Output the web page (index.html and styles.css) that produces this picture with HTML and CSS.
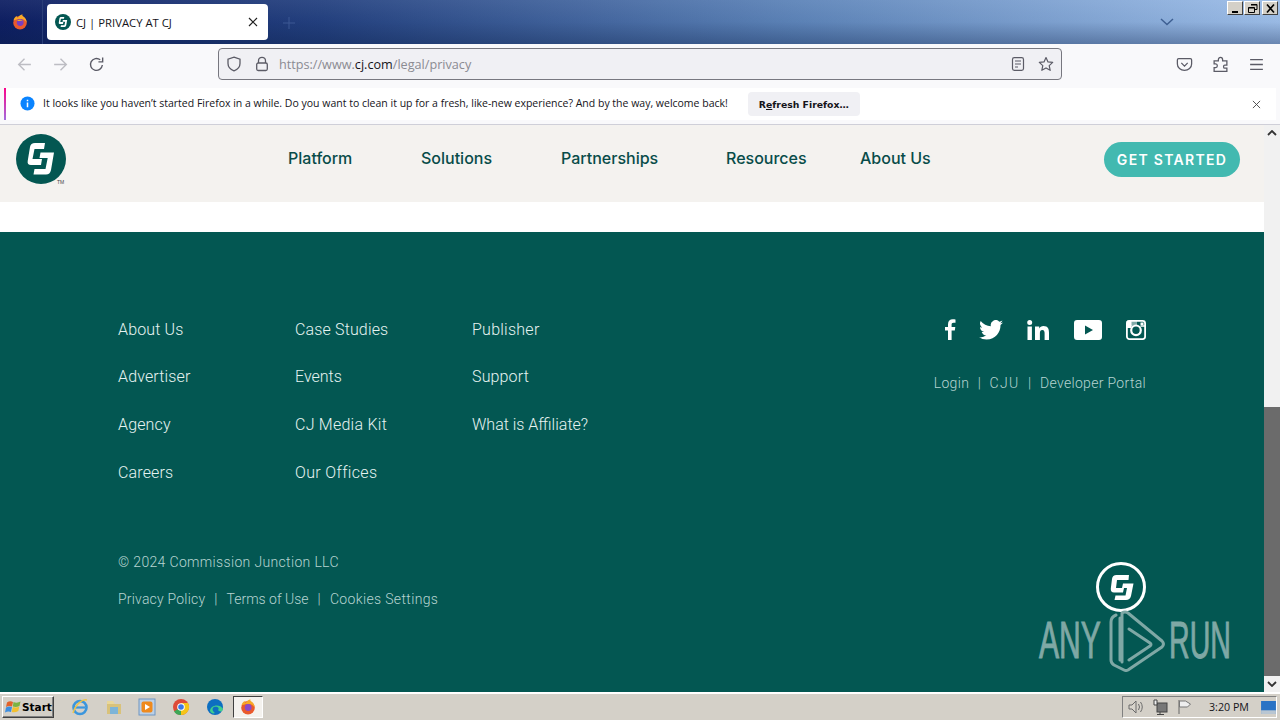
FILE: index.html
```html
<!DOCTYPE html>
<html lang="en">
<head>
<meta charset="utf-8">
<title>CJ | PRIVACY AT CJ</title>
<link rel="stylesheet" href="styles.css">
</head>
<body>
<div class="window">
  <header class="titlebar">
    <div class="ff-menu">
      <svg class="ic16 ff-ic" viewBox="0 0 16 16"><circle cx="8" cy="8.700" r="6.800" fill="#ea5a2c"/><path d="M1.500 6.500C2 4 3.500 2.500 5 2c-.5 1 0 1.500 1 1.500C7 2 9 .5 10.500.3 10 1.500 10.500 2 12 3c1.500 1.300 2.500 3 2.700 5.500C13 5.500 10 4.500 7 5 4.500 5.200 3 6 1.500 6.500z" fill="#f7a928"/><circle cx="8.200" cy="8.500" r="3.400" fill="#7a3fc0"/><path d="M5 6.500c2-1.500 5-1 6 1-1-.8-2-.8-3-.5-1 .2-2 0-3-.5z" fill="#f7a928"/></svg>
    </div>
    <div class="tab">
      <svg class="ic16" viewBox="0 0 50 50"><circle cx="25" cy="25" r="25" fill="#035752"/><path class="cj" d="M29 9L28 15H18.500L16.500 25H26L25 31H15Q11 31 11.700 27L14 13Q14.700 9 19 9Z"/><path class="cj" d="M24.500 18.500H38L35 36Q34 40.500 30 40.500H17.500L18.500 35H29.500L31.700 24H23.500Z"/></svg>
      <span class="tab-title">CJ | PRIVACY AT CJ</span>
      <svg class="tab-x" viewBox="0 0 10 10"><path d="M1 1l8 8M9 1l-8 8" stroke="#222" stroke-width="1.200"/></svg>
    </div>
    <svg class="newtab" viewBox="0 0 14 14"><path d="M7 1v12M1 7h12" stroke="#3c5894" stroke-width="1"/></svg>
    <div class="title-spacer"></div>
    <svg class="tabs-down" viewBox="0 0 14 8"><path d="M1 1l6 5.500 6-5.500" fill="none" stroke="#3e5f92" stroke-width="1.500"/></svg>
    <div class="wincaps">
      <span class="cap"><svg viewBox="0 0 13 11"><path d="M3 8h6v2H3z" fill="#000"/></svg></span>
      <span class="cap"><svg viewBox="0 0 13 11"><path d="M5 1.500h6v5H9M2.500 4.500h6v5h-6zM2.500 5h6M5 2h6" fill="none" stroke="#000"/></svg></span>
      <span class="cap cap-x"><svg viewBox="0 0 13 11"><path d="M3 1.500l7 8M10 1.500l-7 8" stroke="#000" stroke-width="1.700"/></svg></span>
    </div>
  </header>

  <nav class="toolbar">
    <svg class="tool tool-off" viewBox="0 0 16 16"><path d="M14 8H2.500M8 2.500L2.500 8 8 13.500" fill="none" stroke="currentColor" stroke-width="1.300"/></svg>
    <svg class="tool tool-off" viewBox="0 0 16 16"><path d="M2 8h11.500M8 2.500L13.500 8 8 13.500" fill="none" stroke="currentColor" stroke-width="1.300"/></svg>
    <svg class="tool" viewBox="0 0 16 16"><path d="M13.500 8.500A5.600 5.600 0 1 1 11.500 3.600M13.800 1.500v4h-4" fill="none" stroke="currentColor" stroke-width="1.300"/></svg>
    <div class="urlbar">
      <svg class="url-ic" viewBox="0 0 16 16"><path d="M8 1.200l6 2v4.300c0 3.500-2.500 6-6 7.300-3.500-1.300-6-3.800-6-7.300V3.200z" fill="none" stroke="currentColor" stroke-width="1.300"/></svg>
      <svg class="url-ic" viewBox="0 0 16 16"><path d="M4.500 7V4.800a3.500 3.500 0 0 1 7 0V7" fill="none" stroke="currentColor" stroke-width="1.300"/><rect x="2.700" y="7" width="10.600" height="7.500" rx="1.500" fill="none" stroke="currentColor" stroke-width="1.300"/></svg>
      <span class="url"><span class="url-dim">https://www.</span>cj.com<span class="url-dim">/legal/privacy</span></span>
      <svg class="url-ic-r" viewBox="0 0 16 16"><rect x="2.500" y="1.700" width="11" height="12.600" rx="1.800" fill="none" stroke="currentColor" stroke-width="1.200"/><path d="M5 5h6M5 8h6M5 11h3" stroke="currentColor" stroke-width="1.200"/></svg>
      <svg class="url-ic-r" viewBox="0 0 16 16"><path d="M8 1.500l2 4.400 4.700.5-3.500 3.200 1 4.700L8 11.900l-4.200 2.400 1-4.700L1.300 6.400 6 5.900z" fill="none" stroke="currentColor" stroke-width="1.200" stroke-linejoin="round"/></svg>
    </div>
    <div class="tool-right">
      <svg class="tool" viewBox="0 0 16 16"><path d="M2.500 2.500h11q1.200 0 1.200 1.200v3.800c0 3.500-3 6-6.700 6s-6.700-2.500-6.700-6V3.700q0-1.200 1.200-1.200zM5 6.500l3 3 3-3" fill="none" stroke="currentColor" stroke-width="1.200"/></svg>
      <svg class="tool" viewBox="0 0 16 16"><path d="M6 3.500c0-3 4-3 4 0v1h4v4h-2c-1.500 0-1.500 3 0 3h2V14.500H2V11h1.500c2 0 2-3.500 0-3.500H2V4.500h4z" fill="none" stroke="currentColor" stroke-width="1.200"/></svg>
      <svg class="tool" viewBox="0 0 16 16"><path d="M2 3.500h12M2 8h12M2 12.500h12" stroke="currentColor" stroke-width="1.200"/></svg>
    </div>
  </nav>

  <div class="notice">
    <div class="notice-inner">
      <svg class="info" viewBox="0 0 16 16"><circle cx="8" cy="8" r="7.500" fill="#0a84ff"/><path d="M7.200 7h1.600v5H7.200zM7.200 4h1.600v1.700H7.200z" fill="#fff"/></svg>
      <span class="notice-text">It looks like you haven’t started Firefox in a while. Do you want to clean it up for a fresh, like-new experience? And by the way, welcome back!</span>
      <button class="notice-btn">R<u>e</u>fresh Firefox…</button>
      <div class="title-spacer"></div>
      <svg class="notice-x" viewBox="0 0 10 10"><path d="M1 1l8 8M9 1l-8 8" stroke="#444" stroke-width="1"/></svg>
    </div>
  </div>

  <div class="viewport">
    <main class="page">
      <div class="site-head">
        <div class="logo-wrap">
          <svg class="logo" viewBox="0 0 50 50"><circle cx="25" cy="25" r="25" fill="#035752"/><path class="cj" d="M29 9L28 15H18.500L16.500 25H26L25 31H15Q11 31 11.700 27L14 13Q14.700 9 19 9Z"/><path class="cj" d="M24.500 18.500H38L35 36Q34 40.500 30 40.500H17.500L18.500 35H29.500L31.700 24H23.500Z"/></svg>
          <span class="tm">TM</span>
        </div>
        <ul class="main-nav">
          <li class="n1">Platform</li>
          <li class="n2">Solutions</li>
          <li class="n3">Partnerships</li>
          <li class="n4">Resources</li>
          <li class="n5">About Us</li>
        </ul>
        <a class="cta">GET STARTED</a>
      </div>
      <div class="gap-white"></div>
      <footer class="site-foot">
        <div class="foot-top">
          <ul class="foot-links">
            <li>About Us</li><li>Case Studies</li><li class="roomy">Publisher</li>
            <li>Advertiser</li><li class="snug">Events</li><li>Support</li>
            <li>Agency</li><li class="roomy">CJ Media Kit</li><li class="flat">What is Affiliate?</li>
            <li>Careers</li><li class="roomy-2">Our Offices</li>
          </ul>
          <div class="foot-right">
            <div class="social">
              <svg class="s-f" viewBox="0 0 11 21"><path d="M3 21V11.500H0V8h3V5.200C3 2 5 .3 7.700.3c1.300 0 2.400.1 2.800.2v3.300H8.500c-1.500 0-1.900.8-1.900 1.900V8h3.700l-.5 3.500H6.600V21z" fill="#fff"/></svg>
              <svg class="s-t" viewBox="0 0 24 20"><path d="M24 2.400c-.9.400-1.800.7-2.800.8 1-.6 1.800-1.600 2.200-2.700-1 .6-2 1-3.100 1.200A4.900 4.900 0 0 0 11.900 6.200 14 14 0 0 1 1.700.9a4.900 4.900 0 0 0 1.500 6.600c-.8 0-1.600-.2-2.200-.6v.1c0 2.400 1.700 4.400 3.900 4.800-.7.200-1.500.2-2.200.1.600 2 2.400 3.400 4.600 3.400A9.900 9.900 0 0 1 0 17.300 14 14 0 0 0 7.500 19.500c9.100 0 14-7.500 14-14v-.6c1-.7 1.800-1.600 2.500-2.500z" fill="#fff"/></svg>
              <svg class="s-l" viewBox="0 0 22 20"><path d="M.5 6.500h4.400V20H.5zM2.700 0a2.500 2.500 0 1 1 0 5 2.500 2.500 0 0 1 0-5zM8 6.500h4.200v1.900c.7-1.200 2.200-2.300 4.300-2.300 4.400 0 5.500 2.800 5.500 6.700V20h-4.400v-6.400c0-1.700-.2-3.600-2.300-3.600s-2.400 1.700-2.400 3.500V20H8z" fill="#fff"/></svg>
              <svg class="s-y" viewBox="0 0 28 20"><path fill-rule="evenodd" d="M3 0h22q3 0 3 3v14q0 3-3 3H3q-3 0-3-3V3q0-3 3-3zM11 5.500v9l8-4.500z" fill="#fff"/></svg>
              <svg class="s-i" viewBox="0 0 20 20"><rect x=".9" y=".9" width="18.200" height="18.200" rx="2.500" fill="none" stroke="#fff" stroke-width="1.800"/><path d="M1 7.500h4v-6.500H1zM6 1v5M8 1v4M10 1v4" stroke="#fff" fill="#fff" stroke-width="1"/><path d="M1 6h4.500M14.500 6H19" stroke="#fff" stroke-width="1.500"/><circle cx="10" cy="10.300" r="4.800" fill="none" stroke="#fff" stroke-width="2.200"/><rect x="14.500" y="2.500" width="3" height="2.500" fill="#fff"/></svg>
            </div>
            <div class="foot-sub"><span>Login</span><i>|</i><span class="cju">CJU</span><i>|</i><span>Developer Portal</span></div>
          </div>
        </div>
        <div class="foot-copy">© 2024 Commission Junction LLC</div>
        <div class="foot-legal"><span>Privacy Policy</span><i>|</i><span class="terms">Terms of Use</span><i>|</i><span class="cookies">Cookies Settings</span></div>
        <div class="badge">
          <svg class="badge-logo" viewBox="0 0 50 50"><circle cx="25" cy="25" r="23.500" fill="#035752" stroke="#fff" stroke-width="3"/><path class="cj" d="M33 13H20.500Q16.500 13 16 17L14.800 26.500Q14.500 30.500 18 30.500H27L28 26H20L21 18H32.500Z"/><path class="cj" d="M27 21.500H37.500L35 34Q34 38 30 38H18.500L19.500 33.500H29.500L31 26H26Z"/></svg>
        </div>
        <div class="anyrun">
          <span class="any">ANY</span>
          <svg class="anyrun-mark" viewBox="0 0 58 62"><path d="M8 5Q3 7 3 12V50Q3 53 6 55L16 60Q18 61 20 60L54 37Q57 34 54 31L20 3Q17 1 14 3V52M12 8V50M21 19L42 33Q44 34.500 42 36L21 50" fill="none" stroke="#7fa8a5" stroke-width="3" stroke-linejoin="round" stroke-linecap="round"/></svg>
          <span class="run">RUN</span>
        </div>
      </footer>
    </main>
    <aside class="scrollbar">
      <div class="sb-btn"><svg viewBox="0 0 10 6"><path d="M1 5l4-4 4 4" fill="none" stroke="#333" stroke-width="1.800"/></svg></div>
      <div class="sb-track"></div>
      <div class="sb-thumb"></div>
      <div class="sb-btn"><svg viewBox="0 0 10 6"><path d="M1 1l4 4 4-4" fill="none" stroke="#333" stroke-width="1.800"/></svg></div>
    </aside>
  </div>

  <div class="taskbar">
    <button class="start">
      <svg class="start-ic" viewBox="0 0 16 14"><path d="M2 2.500Q5 .5 8 2L7 6.500Q4 5.500 1 7z" fill="#e2622a"/><path d="M8.500 2Q12 3.500 15.500 1.500L14.500 6Q11 7.500 7.800 6.500z" fill="#7bb342"/><path d="M1 7.500Q4 6 7 7L6 12Q3 11 0 12.500z" fill="#3d8ee0"/><path d="M7.800 7Q11 8 14.300 6.500L13.300 11Q10 13 6.700 12z" fill="#f3c02f"/></svg>
      <span>Start</span>
    </button>
    <div class="quick">
      <svg class="task-ic" viewBox="0 0 18 18"><circle cx="9" cy="9.500" r="6.500" fill="none" stroke="#3b96dd" stroke-width="2.600"/><path d="M4 9.500h10" stroke="#3b96dd" stroke-width="2.200"/><path d="M2 15C5 5 12 1 16 2" fill="none" stroke="#efc44a" stroke-width="1.500"/></svg>
      <svg class="task-ic" viewBox="0 0 18 18"><path d="M2 6h14v10H2z" fill="#d9c27a"/><path d="M2 6V3h6l2 3z" fill="#e9d79a"/><path d="M5 9h8v7H5z" fill="#7db4d8"/></svg>
      <svg class="task-ic" viewBox="0 0 18 18"><rect x="1" y="1" width="16" height="16" fill="#bcd0e6" stroke="#6f96c2"/><rect x="3.500" y="3.500" width="11" height="11" rx="2" fill="#ef8a1d"/><path d="M7 6l5 3-5 3z" fill="#fff"/></svg>
      <svg class="task-ic" viewBox="0 0 18 18"><circle cx="9" cy="9" r="8" fill="#dd4b39"/><path d="M9 9L2 13.500A8 8 0 0 0 9 17z" fill="#3da757"/><path d="M9 5h7a8 8 0 0 1-7 12z" fill="#f5c518"/><circle cx="9" cy="9" r="3.800" fill="#fff"/><circle cx="9" cy="9" r="2.800" fill="#3b78e7"/></svg>
      <svg class="task-ic" viewBox="0 0 18 18"><circle cx="9" cy="9" r="8" fill="#0d6fc1"/><path d="M4 13c0-6 10-8 13-2 0 3-4 3-5 1 2-2-1-4-4-3-2 1-2 4 1 6-2 1-4 0-5-2z" fill="#3fcf8e"/></svg>
      <span class="task-active">
        <svg class="ic16" viewBox="0 0 16 16"><circle cx="8" cy="8.700" r="6.800" fill="#ea5a2c"/><path d="M1.500 6.500C2 4 3.500 2.500 5 2c-.5 1 0 1.500 1 1.500C7 2 9 .5 10.500.3 10 1.500 10.500 2 12 3c1.500 1.300 2.500 3 2.700 5.500C13 5.500 10 4.500 7 5 4.500 5.200 3 6 1.500 6.500z" fill="#f7a928"/><circle cx="8.200" cy="8.500" r="3.400" fill="#8a4bc9"/></svg>
      </span>
    </div>
    <div class="title-spacer"></div>
    <div class="tray">
      <svg class="tray-ic" viewBox="0 0 16 16"><path d="M1 6h3l4-4v12l-4-4H1zM10.500 5q2 3 0 6M12.500 3q3.500 5 0 10" fill="#d8d4cc" stroke="#6a6a6a"/></svg>
      <svg class="tray-ic" viewBox="0 0 16 16"><rect x="5" y="4" width="10" height="9" fill="#777" stroke="#444"/><path d="M2 1h3v5H2zM8 13v2M5 15.500h7" fill="#eee" stroke="#444"/></svg>
      <svg class="tray-ic" viewBox="0 0 16 16"><path d="M3 1v14" stroke="#666"/><path d="M3.500 2h6l5 3-3 3H3.500z" fill="#eee" stroke="#777"/></svg>
      <span class="clock">3:20 PM</span>
      <svg class="desk-ic" viewBox="0 0 16 14"><rect width="16" height="14" fill="#2a73c5"/><rect y="10" width="16" height="4" fill="#b9c6d2"/></svg>
    </div>
  </div>
</div>
</body>
</html>
```

FILE: styles.css
```css
* { box-sizing: border-box; }
html, body { margin: 0; height: 100%; overflow: hidden; }
ul { list-style: none; margin: 0; padding: 0; }
svg { display: block; flex: none; }
i { font-style: normal; }
.window { width: 1280px; height: 720px; display: flex; flex-direction: column; font-family: "Open Sans", "Noto Sans", sans-serif; color: #15141a; }
.title-spacer { flex: 1; }
.ic16 { width: 16px; height: 16px; }

.titlebar { height: 44px; display: flex; align-items: flex-start; background: linear-gradient(180deg, rgba(255,255,255,.06), rgba(0,0,0,.02) 50%, rgba(10,30,70,.34)), linear-gradient(90deg, #0e1f63 0, #23407f 25%, #5c83b8 62%, #9cbde8 100%); position: relative; }
.ff-menu { width: 43px; height: 44px; display: flex; align-items: center; justify-content: center; border-right: 1px solid #2b3f78; }
.ff-ic { margin-right: 3px; }
.tab { margin: 4px 0 0 4px; width: 221px; height: 36px; background: #fff; border-radius: 4px; display: flex; align-items: center; padding: 0 10px 0 8px; }
.tab-title { margin-left: 5px; font-size: 11.300px; flex: 1; white-space: nowrap; }
.tab-x { width: 10px; height: 10px; }
.newtab { width: 14px; height: 14px; margin: 16px 0 0 14px; }
.tabs-down { width: 14px; height: 8px; margin: 18px 106px 0 0; }
.wincaps { position: absolute; top: 1px; right: 2px; display: flex; gap: 1px; }
.cap { width: 16px; height: 14px; background: #d4d0c8; border: 1px solid; border-color: #fff #404040 #404040 #fff; display: flex; align-items: center; justify-content: center; }
.cap svg { width: 13px; height: 11px; }
.cap-x { margin-left: 1px; }

.toolbar { height: 44px; background: #f9f9fb; display: flex; align-items: center; padding: 0 0 4px 16px; color: #4a4a4f; }
.tool { width: 17px; height: 17px; color: #5b5b66; margin-right: 19px; }
.tool-off { color: #bdbdc3; }
.urlbar { flex: none; width: 844px; height: 32px; margin-left: 94px; background: #f0f0f4; border: 1px solid #77777f; border-radius: 4px; display: flex; align-items: center; padding: 0 7px; color: #5b5b66; }
.url-ic { width: 16px; height: 16px; margin-right: 12px; }
.url { flex: 1; font-size: 12.650px; color: #15141a; white-space: nowrap; margin-left: -3px; }
.url-dim { color: #8b8b92; }
.url-ic-r { width: 16px; height: 16px; margin-left: 12px; }
.tool-right { display: flex; flex: none; margin-left: 114px; }
.tool-right .tool { margin-right: 19px; width: 17px; }

.notice { height: 37px; background: #f9f9fb; border-bottom: 1px solid #cfcfd8; padding: 0 4px; }
.notice-inner { height: 32px; background: #fff; border-left: 2px solid; border-image: linear-gradient(180deg, #f08, #a070e0) 1; display: flex; align-items: center; padding-left: 14px; }
.info { width: 15px; height: 15px; margin-top: -1px; }
.notice-text { margin: -3px 0 0 8px; font-size: 10.500px; white-space: nowrap; }
.notice-btn { margin-left: 20px; width: 112px; height: 24px; border: 0; border-radius: 4px; background: #f0f0f4; font-family: "DejaVu Sans", sans-serif; font-weight: 700; font-size: 9.300px; color: #15141a; padding: 0; }
.notice-x { width: 9px; height: 9px; margin-right: 15px; }

.viewport { height: 567px; display: flex; }
.page { flex: 1; min-width: 0; display: flex; flex-direction: column; background: #fff; }
.site-head { height: 77px; background: #f4f2ef; display: flex; align-items: flex-start; padding-left: 16px; position: relative; }
.logo-wrap { width: 50px; margin-top: 9px; position: relative; }
.logo { width: 50px; height: 50px; }
.cj { fill: #fff; }
.tm { position: absolute; font: 5px "Liberation Sans", sans-serif; left: 41px; top: 45px; color: #444; }
.main-nav { display: flex; margin-left: 222px; margin-top: 23px; font-family: Inter, sans-serif; font-weight: 500; font-size: 16px; line-height: 20px; color: #084c49; white-space: nowrap; }
.n1 { width: 133px; }
.n2 { width: 140px; }
.n3 { width: 165px; }
.n4 { width: 134px; }
.cta { position: absolute; right: 24px; top: 17px; width: 136px; height: 35px; border-radius: 18px; background: #42b9b0; color: #fff; font-family: Inter, sans-serif; font-weight: 600; font-size: 14px; letter-spacing: 1.300px; display: flex; align-items: center; justify-content: center; }
.gap-white { height: 30px; }

.site-foot { flex: 1; background: #035752; color: #e6f3f1; font-family: Roboto, sans-serif; font-weight: 300; position: relative; padding: 86.800px 118px 0; }
.foot-top { display: flex; justify-content: space-between; height: 223.200px; }
.foot-links { display: grid; grid-template-columns: 177px 177px 177px; grid-auto-rows: 47.600px; font-size: 16px; line-height: 22px; align-content: start; letter-spacing: .15px; }
.foot-links .roomy { letter-spacing: .25px; }
.foot-links .roomy-2 { letter-spacing: .35px; }
.foot-links .snug { letter-spacing: 0; }
.foot-links .flat { letter-spacing: 0; }
.foot-right { display: flex; flex-direction: column; align-items: flex-end; margin-top: 1px; }
.social { display: flex; align-items: center; height: 20px; }
.s-f { width: 11px; height: 21px; margin-right: 23px; }
.s-t { width: 24px; height: 20px; margin-right: 24px; }
.s-l { width: 22px; height: 20px; margin-right: 25px; }
.s-y { width: 28px; height: 20px; margin-right: 24px; }
.s-i { width: 20px; height: 20px; }
.foot-sub { margin-top: 33px; font-size: 14px; line-height: 20px; color: #b6d4d1; white-space: nowrap; letter-spacing: .32px; }
.foot-sub i { margin: 0 8.500px; }
.foot-sub .cju { letter-spacing: 1.300px; }
.foot-legal i { margin: 0 9px; }
.foot-legal .terms { letter-spacing: 0; }
.foot-legal .cookies { letter-spacing: .35px; }
.foot-copy { margin-top: 10px; font-size: 14px; line-height: 20px; color: #b6d4d1; letter-spacing: .34px; }
.foot-legal { margin-top: 17px; font-size: 14px; line-height: 20px; color: #b6d4d1; letter-spacing: .2px; }
.badge { position: absolute; left: 1096px; top: 330px; }
.badge-logo { width: 50px; height: 50px; }
.anyrun { position: absolute; left: 1039px; top: 378px; height: 62px; display: flex; align-items: center; font-family: "Liberation Sans", sans-serif; font-weight: 400; font-size: 51px; line-height: 62px; color: #7fa8a5; -webkit-text-stroke: 1px #7fa8a5; }
.any, .run { display: inline-block; transform-origin: left center; width: 62px; }
.any { transform: scaleX(.59); margin-right: 7px; }
.run { transform: scaleX(.56); margin-left: 3px; }
.anyrun-mark { width: 58px; height: 62px; }

.scrollbar { width: 16px; display: flex; flex-direction: column; background: #f1f1f1; }
.sb-btn { height: 16px; display: flex; align-items: center; justify-content: center; background: #f1f1f1; }
.sb-btn svg { width: 10px; height: 6px; }
.sb-track { height: 266px; background: #f1f1f1; }
.sb-thumb { flex: 1; background: #6b6b6b; }

.taskbar { height: 28px; background: #d4d0c8; border-top: 2px solid #fff; display: flex; align-items: center; padding: 0 3px 0 2px; }
.start { width: 52px; height: 22px; background: #d4d0c8; border: 1px solid; border-color: #fff #404040 #404040 #fff; display: flex; align-items: center; padding: 0 0 0 2px; font: 700 11px "DejaVu Sans", sans-serif; color: #000; box-shadow: inset -1px -1px 0 #808080; }
.start-ic { width: 16px; height: 14px; margin-right: 1px; }
.start span { font-size: 10.500px; }
.quick { display: flex; align-items: center; margin-left: 17px; }
.task-ic { width: 18px; height: 18px; margin-right: 15.700px; }
.task-active { width: 30px; height: 22px; margin-left: -6px; background: #f4f2ee; border: 1px solid; border-color: #404040 #fff #fff #404040; display: flex; align-items: center; justify-content: center; }
.tray { width: 155px; height: 22px; border: 1px solid; border-color: #808080 #fff #fff #808080; display: flex; align-items: center; padding-left: 5px; }
.tray-ic { width: 16px; height: 16px; margin-right: 8px; }
.clock { font-family: "Open Sans", sans-serif; font-size: 10.700px; margin-left: 9px; margin-right: 12px; white-space: nowrap; width: 40px; }
.desk-ic { width: 15px; height: 13px; }
```
